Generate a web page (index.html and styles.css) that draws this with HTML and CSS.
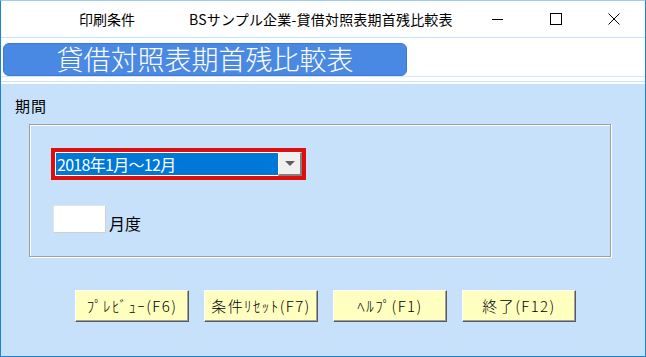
FILE: index.html
```html
<!DOCTYPE html>
<html lang="ja">
<head>
<meta charset="utf-8">
<title>印刷条件</title>
<link rel="stylesheet" href="styles.css">
</head>
<body>
<div class="window">
  <div class="titlebar">
    <span class="app">印刷条件</span>
    <span class="title">BSサンプル企業-貸借対照表期首残比較表</span>
    <div class="controls">
      <span class="ctl"><svg width="12" height="12" viewBox="0 0 12 12"><path d="M0 6.5H11" stroke="#000" stroke-width="1"/></svg></span>
      <span class="ctl"><svg width="12" height="12" viewBox="0 0 12 12"><rect x="0.5" y="0.5" width="11" height="11" fill="none" stroke="#000" stroke-width="1"/></svg></span>
      <span class="ctl"><svg width="12" height="12" viewBox="0 0 12 12"><path d="M0.5 0.5L11.5 11.5M11.5 0.5L0.5 11.5" stroke="#000" stroke-width="1"/></svg></span>
    </div>
  </div>
  <div class="header">
    <div class="pill">貸借対照表期首残比較表</div>
  </div>
  <div class="content">
    <div class="label">期間</div>
    <div class="group">
      <div class="combo">
        <div class="combo-value">2018年1月～12月</div>
        <div class="combo-btn"><svg width="10" height="6" viewBox="0 0 10 6"><path d="M0 0H10L5 5Z" fill="#606060"/></svg></div>
      </div>
      <div class="month-row">
        <div class="month-input"></div>
        <span class="month-label">月度</span>
      </div>
    </div>
    <div class="buttons">
      <div class="btn">ﾌﾟﾚﾋﾞｭｰ(F6)</div>
      <div class="btn">条件ﾘｾｯﾄ(F7)</div>
      <div class="btn">ﾍﾙﾌﾟ(F1)</div>
      <div class="btn">終了(F12)</div>
    </div>
  </div>
</div>
</body>
</html>
```
FILE: styles.css
```css
html, body {
  margin: 0;
  padding: 0;
}
body {
  font-family: "Noto Sans CJK JP", "Noto Sans", sans-serif;
  color: #000;
}
.window {
  width: 646px;
  height: 357px;
  box-sizing: border-box;
  border: 1px solid #1883d7;
  border-top-color: #9fcbf0;
  background: #c7e1fa;
  display: flex;
  flex-direction: column;
}
.titlebar {
  height: 36px;
  flex: none;
  background: #fff;
  border-bottom: 1px solid #c7e1fa;
  display: flex;
  align-items: center;
  padding-left: 78px;
  font-size: 14px;
  line-height: 18px;
}
.title {
  margin-left: 54px;
  letter-spacing: 0.2px;
}
.controls {
  margin-left: auto;
  margin-right: 2px;
  display: flex;
}
.ctl {
  width: 58px;
  height: 36px;
  display: flex;
  align-items: center;
  justify-content: center;
}
.header {
  height: 50px;
  flex: none;
  box-sizing: border-box;
  padding: 5px 0 0 2px;
  background: linear-gradient(to bottom, #ffffff 0 38px, #d4e7fa 38px 39px, #ffffff 39px 43px, #c7e1fa 43px 44px, #ffffff 44px 46px, #c7e1fa 46px 50px);
}
.pill {
  width: 404px;
  height: 33px;
  box-sizing: border-box;
  background: #4a89e3;
  border: 1px solid #3c78d4;
  border-radius: 6px;
  color: #fff;
  font-size: 27px;
  font-weight: 300;
  line-height: 30px;
  text-align: center;
}
.content {
  flex: 1;
  padding-left: 14px;
}
.label {
  margin-top: 9px;
  font-size: 15px;
  line-height: 18px;
  letter-spacing: 1px;
}
.group {
  margin-top: 9px;
  margin-left: 14px;
  width: 582px;
  height: 133px;
  box-sizing: border-box;
  border: 1px solid #a0a0a0;
  box-shadow: inset 1px 1px 0 #fff, 1px 1px 0 #fff;
  padding: 23px 0 0 21px;
}
.combo {
  width: 255px;
  height: 32px;
  box-sizing: border-box;
  border: 4px solid #e00d0d;
  background: #fff;
  display: flex;
  padding-left: 1px;
}
.combo-value {
  width: 222px;
  height: 22px;
  margin-top: 1px;
  background: #0078d7;
  color: #fff;
  font-size: 16px;
  line-height: 22px;
  padding-left: 1px;
  box-sizing: border-box;
  letter-spacing: -0.7px;
}
.combo-btn {
  width: 24px;
  height: 24px;
  box-sizing: border-box;
  background: #f0f0f0;
  border-top: 1px solid #fff;
  border-left: 1px solid #fff;
  border-right: 2px solid #808080;
  border-bottom: 2px solid #808080;
  display: flex;
  align-items: center;
  justify-content: center;
}
.month-row {
  margin-top: 25px;
  margin-left: 2px;
  display: flex;
  align-items: flex-end;
}
.month-input {
  width: 53px;
  height: 28px;
  box-sizing: border-box;
  background: #fff;
  border: 1px solid #e4e4e4;
  border-bottom-color: #d0d0d0;
  border-right-color: #d0d0d0;
}
.month-label {
  margin-left: 3px;
  font-size: 16px;
  line-height: 20px;
}
.buttons {
  margin-top: 33px;
  padding-left: 60px;
  display: flex;
  gap: 15px;
}
.btn {
  width: 114px;
  height: 32px;
  box-sizing: border-box;
  background: #ffffc0;
  border-top: 1px solid #fff;
  border-left: 1px solid #fff;
  border-right: 1px solid #5a5a5a;
  border-bottom: 1px solid #5a5a5a;
  box-shadow: inset -1px -1px 0 #a0a0a0;
  font-size: 15px;
  font-weight: 300;
  line-height: 30px;
  letter-spacing: 1.4px;
  text-align: center;
}
```
